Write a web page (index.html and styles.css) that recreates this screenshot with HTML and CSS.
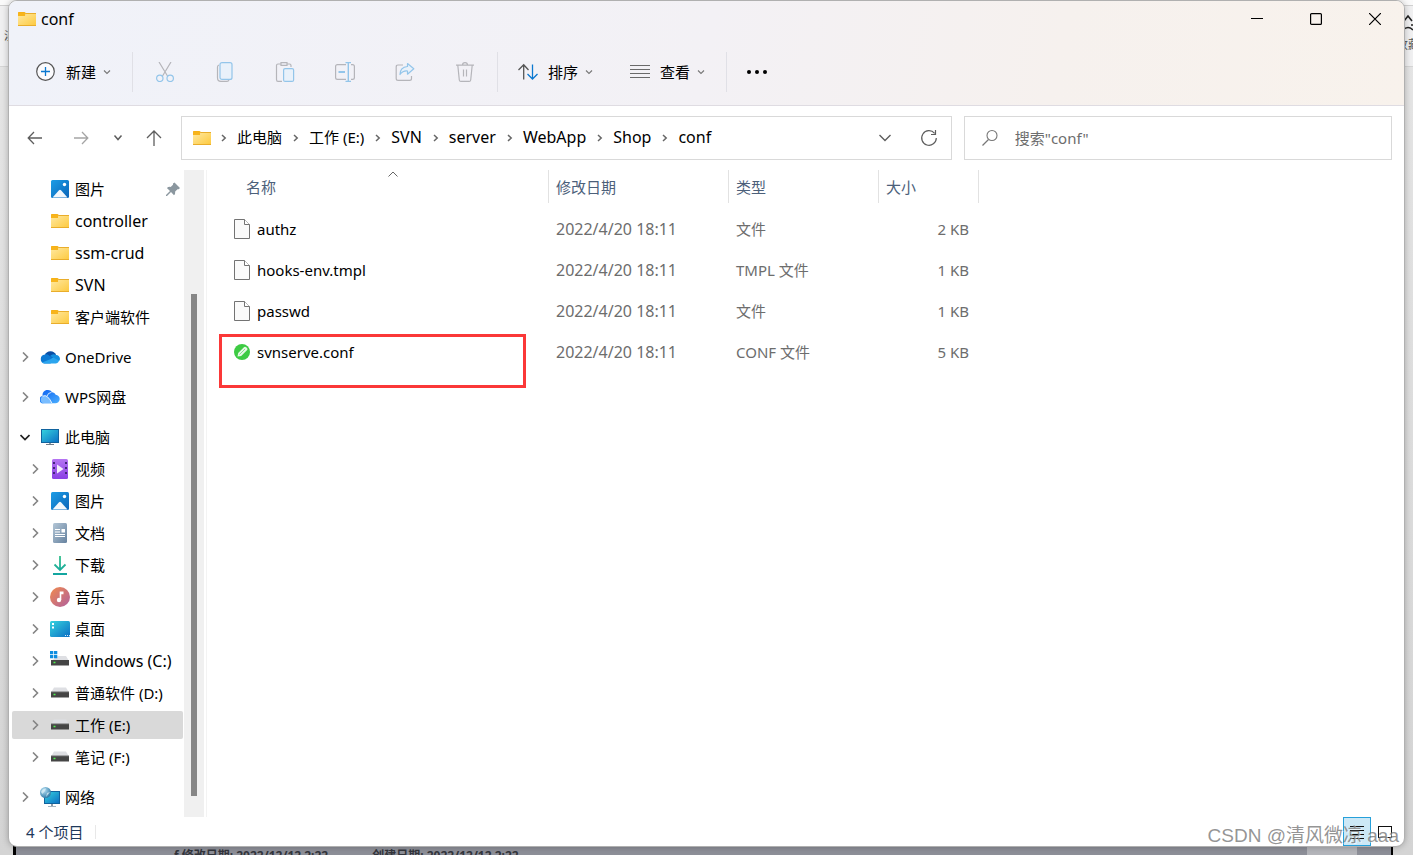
FILE: index.html
```html
<!DOCTYPE html>
<html lang="zh-CN">
<head>
<meta charset="utf-8">
<title>conf</title>
<link rel="stylesheet" href="styles.css">
</head>
<body>
<svg class="defs" aria-hidden="true">
  <defs>
    <linearGradient id="gFolder" x1="0" y1="0" x2="1" y2="1"><stop offset="0" stop-color="#ffe9a2"/><stop offset="1" stop-color="#fdc93d"/></linearGradient>
    <linearGradient id="gPic" x1="0" y1="0" x2="1" y2="1"><stop offset="0" stop-color="#1c9de6"/><stop offset="1" stop-color="#0b64b8"/></linearGradient>
    <linearGradient id="gScreen" x1="0" y1="0" x2="1" y2="1"><stop offset="0" stop-color="#36d3de"/><stop offset="1" stop-color="#0b6ec4"/></linearGradient>
    <linearGradient id="gVideo" x1="0" y1="0" x2="0" y2="1"><stop offset="0" stop-color="#b574f2"/><stop offset="1" stop-color="#8a40e4"/></linearGradient>
    <linearGradient id="gDoc" x1="0" y1="0" x2="1" y2="1"><stop offset="0" stop-color="#b3c6d6"/><stop offset="1" stop-color="#66829f"/></linearGradient>
    <linearGradient id="gMusic" x1="0" y1="0" x2="1" y2="1"><stop offset="0" stop-color="#f18a4c"/><stop offset="1" stop-color="#b0609f"/></linearGradient>
    <linearGradient id="gDown" x1="0" y1="0" x2="0" y2="1"><stop offset="0" stop-color="#35c08c"/><stop offset="1" stop-color="#12a5a0"/></linearGradient>
    <linearGradient id="gWps" x1="0" y1="0" x2="1" y2="1"><stop offset="0" stop-color="#0a5ef0"/><stop offset="1" stop-color="#4bb0ff"/></linearGradient>
    <radialGradient id="gGlobe" cx=".35" cy=".3" r=".8"><stop offset="0" stop-color="#b9e2f5"/><stop offset="1" stop-color="#22709f"/></radialGradient>
  </defs>
  <symbol id="folder" viewBox="0 0 20 20"><path d="M1 4q0-1 1-1h5.500l1.500 2h-2v2H1z" fill="#f5ad13"/><path d="M1 3.500h7.500V7H1z" fill="#f7b41b"/><path d="M1 7h7l1.500-2.500H19V17H1z" fill="url(#gFolder)"/><path d="M8.500 4.500H19M1 16.500h18" stroke="#e9ad2b" fill="none"/></symbol>
  <symbol id="picture" viewBox="0 0 20 20"><rect x="1" y="1" width="18" height="18" rx="1.500" fill="url(#gPic)"/><path d="M2.500 18.500 9 11.300q1-1 2 0l6.500 7.200z" fill="#f2f7fc"/><circle cx="14.500" cy="5.500" r="1.700" fill="#fff"/></symbol>
  <symbol id="onedrive" viewBox="0 0 20 20"><path d="M5 8a6 6 0 0 1 11-.2L12 13z" fill="#0a4fa6"/><path d="M4.500 16.500A4.600 4.600 0 0 1 5 7.400q2.500-.3 4.500 1.300l5 3.500-4 4.300z" fill="#0c79d3"/><path d="m11 12 4-3.800a4.200 4.200 0 0 1 .8 8.300H4.500q-1.500 0-2.500-1z" fill="#2ba5ee"/><path d="M10 9q2.500-2.600 6-1.100A4.300 4.300 0 0 1 20 12l-.5 1.700z" fill="#1590df"/></symbol>
  <symbol id="wps" viewBox="0 0 20 20"><path d="M2.500 7.800A5.300 5.300 0 0 1 12.200 5.300a4 4 0 0 1 3.500 2.500 4.200 4.200 0 0 1-.5 8.500H4A3.700 3.700 0 0 1 2.500 9z" fill="url(#gWps)"/><path d="M.8 13.500a4 4 0 0 1 6.400-4q3 2.200 5 6.800H4A3.300 3.300 0 0 1 .8 13.500z" fill="#79bdff"/><path d="M2.500 9.200q3-1.400 5 .6 2.500 2.200 4.500 6.500M7 9.200q.8-3.400 4.500-3.900" stroke="#fff" stroke-width=".8" fill="none"/></symbol>
  <symbol id="pc" viewBox="0 0 20 20"><rect x="1.500" y="2.500" width="17" height="13" fill="url(#gScreen)" stroke="#11639e"/><path d="M9 16h2v2H9z" fill="#8e9aa5"/><path d="M6 17.500h8" stroke="#6f7b87"/></symbol>
  <symbol id="video" viewBox="0 0 20 20"><rect x="2" width="16" height="20" rx="1.500" fill="url(#gVideo)"/><path d="M7 5.500v9l6.500-4.500z" fill="#f5eefc"/><path d="M4 3v15M16 3v15" stroke="#44257c" stroke-width="2" stroke-dasharray="2 3"/></symbol>
  <symbol id="doc" viewBox="0 0 20 20"><rect x="3" width="14" height="20" rx="1.500" fill="url(#gDoc)"/><path d="M5 6.500h5M5 9h5M5 11.500h10M5 13.500h10" stroke="#fff"/><path d="M11.500 6h3.500v3.500h-3.500z" fill="#fff"/></symbol>
  <symbol id="download" viewBox="0 0 20 20"><path d="M10 1v14M4.500 9.500 10 15l5.500-5.500M3 19h14" fill="none" stroke="url(#gDown)" stroke-width="1.800"/></symbol>
  <symbol id="music" viewBox="0 0 20 20"><circle cx="10" cy="10" r="10" fill="url(#gMusic)"/><circle cx="9" cy="13" r="2.200" fill="#fff"/><path d="M9.700 13V4.500h3.800v2.700h-2.200V13" fill="#fff"/></symbol>
  <symbol id="desktop" viewBox="0 0 20 20"><rect y="2" width="20" height="16" rx="1.500" fill="url(#gScreen)"/><path d="M2 4h2v2H2zM2 7.500h2v2H2z" fill="#fff"/><path d="M15 16.500h1m1 0h1m1 0h1" stroke="#d8ecfa"/></symbol>
  <symbol id="drive" viewBox="0 0 20 20"><path d="M4 4.500h12l3 5H1z" fill="#dedfe3"/><path d="M1 9h18v5.500H1z" fill="#454545"/><path d="M1 9h18" stroke="#686868"/><path d="M3.500 11.500h2" stroke="#4ef04e" stroke-width="1.500"/></symbol>
  <symbol id="windrive" viewBox="0 0 20 20"><path d="M8 5h8l3 5H1z" fill="#dedfe3"/><path d="M1 9h18v5.500H1z" fill="#454545"/><path d="M3.500 11.500h2" stroke="#4ef04e" stroke-width="1.500"/><path d="M0 0h3.300v3.300H0zM4 0h3.300v3.300H4zM0 4h3.300v3.300H0zM4 4h3.300v3.300H4z" fill="#0e8ee0"/></symbol>
  <symbol id="network" viewBox="0 0 20 20"><rect x="4.500" y="4.500" width="15" height="12" fill="url(#gScreen)" stroke="#11639e"/><path d="M11 17h2v2.500h-2z" fill="#8e9aa5"/><path d="M8 19.500h8" stroke="#a3b4c0"/><circle cx="5.500" cy="5.500" r="5.500" fill="url(#gGlobe)"/><path d="M1 5q2-4 5-3.500L5 4 2.500 7M6 10l1-4 3-1" fill="#e0f1f8" opacity=".7"/></symbol>
  <symbol id="pin" viewBox="0 0 16 16"><path d="m9.500 1.500 5.500 5.500-1.300 1.300-1.200-.1-2.300 2.300q.3 2.300-1.200 3.700L6 11 2 15H1v-1l4-4L1.900 7q1.500-1.400 3.800-1.100L8 3.700 8 2.500z" fill="#8b979f"/></symbol>
  <symbol id="right" viewBox="0 0 10 10"><path d="m3 .500 4.500 4.500-4.500 4.500" fill="none" stroke="#858585" stroke-width="1.600"/></symbol>
  <symbol id="open" viewBox="0 0 10 10"><path d="m.5 3 4.500 4.500L9.500 3" fill="none" stroke="#222" stroke-width="1.700"/></symbol>
  <symbol id="crumb" viewBox="0 0 7 8"><path d="m2 1 3.200 3L2 7" fill="none" stroke="#666" stroke-width="1.500"/></symbol>
  <symbol id="small" viewBox="0 0 8 8"><path d="m1 2.500 3 3 3-3" fill="none" stroke="#777" stroke-width="1.100"/></symbol>
  <symbol id="file" viewBox="0 0 16 20"><path d="M.5.500h10l5 5v14H.5z" fill="#fafafa" stroke="#737373"/><path d="M10.500.500v5h5" fill="#fff" stroke="#737373"/></symbol>
</svg>

<div class="backdrop" aria-hidden="true">
  <div class="behind-bar"><span>淡</span><span class="behind-fav"><svg width="22" height="22" viewBox="0 0 22 22"><path d="m7 8 4-5 4 5M6 12h2m6 0h2M6 17q5-5 10 0" fill="none" stroke="#222" stroke-width="1.600"/></svg>收藏</span></div>
  <div class="behind-strip"><span class="behind-thumb"></span><span>f 修改日期: 2022/12/12 2:22</span><span>创建日期: 2022/12/12 2:22</span><span class="behind-pen"></span></div>
</div>

<main class="window">
  <header class="top">
    <div class="titlebar">
      <svg class="ico"><use href="#folder"/></svg>
      <h1>conf</h1>
      <div class="controls">
        <button aria-label="最小化"><svg width="12" height="12" viewBox="0 0 12 12"><path d="M0 5.500h12" stroke="#000"/></svg></button>
        <button aria-label="最大化"><svg width="12" height="12" viewBox="0 0 12 12"><rect x=".6" y=".6" width="10.800" height="10.800" rx="1" fill="none" stroke="#000" stroke-width="1.200"/></svg></button>
        <button aria-label="关闭"><svg width="12" height="12" viewBox="0 0 12 12"><path d="m0 0 12 12M12 0 0 12" stroke="#000" stroke-width="1.200"/></svg></button>
      </div>
    </div>
    <div class="toolbar">
      <button class="cmd"><svg class="ico" viewBox="0 0 20 20"><circle cx="9.500" cy="9.500" r="8.800" fill="#fbfbfd" stroke="#555" stroke-width="1.200"/><path d="M9.500 5v9M5 9.500h9" stroke="#0b78d0" stroke-width="1.300"/></svg><span>新建</span><svg class="tiny"><use href="#small"/></svg></button>
      <i class="rule"></i>
      <button class="tool" aria-label="剪切" disabled><svg class="ico" viewBox="0 0 20 20" fill="none" stroke-width="1.200"><path d="m4 0 8.500 14M16 0 7.500 14" stroke="#b5b5ba"/><circle cx="4.800" cy="16.300" r="3.200" stroke="#93c5ea"/><circle cx="15.200" cy="16.300" r="3.200" stroke="#93c5ea"/></svg></button>
      <button class="tool" aria-label="复制" disabled><svg class="ico" viewBox="0 0 20 20" fill="none" stroke-width="1.200"><path d="M4 3q-1.500.5-1.500 2v11q0 3.400 3.400 3.400H12q1.500 0 2-1.400" stroke="#b5b5ba"/><rect x="5" y=".6" width="12" height="16.800" rx="2" stroke="#93c5ea" fill="#e9f1fa"/></svg></button>
      <button class="tool" aria-label="粘贴" disabled><svg class="ico" viewBox="0 0 20 20" fill="none" stroke-width="1.200"><path d="M6 2H3q-1.500 0-1.500 1.500v14Q1.500 19.400 3 19.400h4M12 2h2.500Q16 2 16 3.500V5M6 .6h6v2.700H6z" stroke="#b5b5ba"/><rect x="8.600" y="6.600" width="10" height="12.800" rx="1.500" stroke="#93c5ea" fill="#e9f1fa"/></svg></button>
      <button class="tool" aria-label="重命名" disabled><svg class="ico" viewBox="0 0 20 20" fill="none" stroke-width="1.200"><path d="M11 2.600H2.500Q.6 2.600.6 4.500v11q0 1.900 1.900 1.900H11M16 2.600h1.500q1.900 0 1.900 1.900v11q0 1.900-1.900 1.900H16" stroke="#b5b5ba"/><path d="M10.500.6h5.500M10.500 19.400h5.500M13.300.6v18.800" stroke="#93c5ea" stroke-width="1.400"/><path d="M3.500 10H10" stroke="#93c5ea" stroke-width="2.200"/></svg></button>
      <button class="tool" aria-label="共享" disabled><svg class="ico" viewBox="0 0 20 20" fill="none" stroke-width="1.200" stroke-linejoin="round"><path d="M8 3H3Q1.200 3 1.200 5v11.500q0 1.900 1.900 1.900h11.500q1.900 0 1.900-1.900V14" stroke="#b5b5ba"/><path d="m12.500 1.500 6.300 5.300-6.300 5.400V9Q8 8.500 5 12.500q0-7.300 7.500-8z" stroke="#93c5ea" fill="#e9f1fa"/></svg></button>
      <button class="tool" aria-label="删除" disabled><svg class="ico" viewBox="0 0 20 20" fill="none" stroke="#b5b5ba" stroke-width="1.200"><path d="M1 3.200h18M7.500 3q0-2.400 2.500-2.400T12.500 3M2.800 3.200 4.300 18q.2 1.400 1.500 1.400h8.400q1.300 0 1.500-1.400l1.500-14.800M8.500 7.500v7M11.500 7.500v7"/></svg></button>
      <i class="rule"></i>
      <button class="cmd"><svg class="ico" viewBox="0 0 20 20" fill="none" stroke-width="1.300"><path d="M5.700 17.500V3M.5 8l5.200-5.200L10.500 8" stroke="#555"/><path d="M14.500 2.500V17M9.500 12l5 5 5-5" stroke="#0b78d0"/></svg><span>排序</span><svg class="tiny"><use href="#small"/></svg></button>
      <button class="cmd"><svg class="ico" viewBox="0 0 20 20"><path d="M0 3.500h20M0 7.500h20M0 11.500h20M0 15.500h20" stroke="#6a6a6a" stroke-width="1.200"/></svg><span>查看</span><svg class="tiny"><use href="#small"/></svg></button>
      <i class="rule"></i>
      <button class="tool more" aria-label="更多"><svg class="ico" viewBox="0 0 20 20" overflow="visible"><circle cx="2" cy="10" r="2"/><circle cx="10" cy="10" r="2"/><circle cx="18" cy="10" r="2"/></svg></button>
    </div>
  </header>

  <div class="navrow">
    <button class="nav" aria-label="后退"><svg width="16" height="14" viewBox="0 0 16 14"><path d="M15 7H1.500M7 1 1.200 7 7 13" fill="none" stroke="#5e5e5e" stroke-width="1.300"/></svg></button>
    <button class="nav" aria-label="前进" disabled><svg width="16" height="14" viewBox="0 0 16 14"><path d="M1 7h13.500M9 1l5.800 6L9 13" fill="none" stroke="#a5a5a5" stroke-width="1.300"/></svg></button>
    <button class="nav recent" aria-label="最近"><svg width="10" height="8" viewBox="0 0 10 8"><path d="m1.500 1.500 3.500 4 3.500-4" fill="none" stroke="#5e5e5e" stroke-width="1.500"/></svg></button>
    <button class="nav up" aria-label="上移"><svg width="16" height="16" viewBox="0 0 16 16"><path d="M8 16V1M1 8l7-7 7 7" fill="none" stroke="#5e5e5e" stroke-width="1.300"/></svg></button>
    <div class="address">
      <svg class="ico"><use href="#folder"/></svg>
      <svg class="sep"><use href="#crumb"/></svg><a href="#">此电脑</a>
      <svg class="sep"><use href="#crumb"/></svg><a href="#">工作 (E:)</a>
      <svg class="sep"><use href="#crumb"/></svg><a class="latin" href="#">SVN</a>
      <svg class="sep"><use href="#crumb"/></svg><a class="latin" href="#">server</a>
      <svg class="sep"><use href="#crumb"/></svg><a class="latin" href="#">WebApp</a>
      <svg class="sep"><use href="#crumb"/></svg><a class="latin" href="#">Shop</a>
      <svg class="sep"><use href="#crumb"/></svg><a class="latin" href="#">conf</a>
      <div class="address-actions">
        <button aria-label="历史"><svg width="12" height="8" viewBox="0 0 12 8"><path d="m.5 1 5.500 5.500L11.500 1" fill="none" stroke="#5e5e5e" stroke-width="1.400"/></svg></button>
        <button aria-label="刷新"><svg width="18" height="18" viewBox="0 0 18 18"><path d="M14.600 4.300A7.300 7.300 0 1 0 16.300 9M15.500 1v4.500H11" fill="none" stroke="#5e5e5e" stroke-width="1.200"/></svg></button>
      </div>
    </div>
    <label class="search">
      <svg width="18" height="18" viewBox="0 0 18 18"><circle cx="11" cy="6.500" r="5" fill="none" stroke="#777" stroke-width="1.100"/><path d="M7.500 10.500 1.500 16.500" stroke="#777" stroke-width="1.200"/></svg>
      <input type="text" placeholder='搜索"conf"' aria-label="搜索">
    </label>
  </div>

  <div class="content">
    <nav class="sidebar">
      <ul>
        <li class="sub"><i class="chev"></i><svg class="ico"><use href="#picture"/></svg><span>图片</span><svg class="pin"><use href="#pin"/></svg></li>
        <li class="sub latin"><i class="chev"></i><svg class="ico"><use href="#folder"/></svg><span>controller</span></li>
        <li class="sub latin"><i class="chev"></i><svg class="ico"><use href="#folder"/></svg><span>ssm-crud</span></li>
        <li class="sub latin"><i class="chev"></i><svg class="ico"><use href="#folder"/></svg><span>SVN</span></li>
        <li class="sub"><i class="chev"></i><svg class="ico"><use href="#folder"/></svg><span>客户端软件</span></li>
      </ul>
      <ul><li><svg class="chev"><use href="#right"/></svg><svg class="ico"><use href="#onedrive"/></svg><span>OneDrive</span></li></ul>
      <ul><li><svg class="chev"><use href="#right"/></svg><svg class="ico"><use href="#wps"/></svg><span>WPS网盘</span></li></ul>
      <ul>
        <li><svg class="chev"><use href="#open"/></svg><svg class="ico"><use href="#pc"/></svg><span>此电脑</span></li>
        <li class="sub"><svg class="chev"><use href="#right"/></svg><svg class="ico"><use href="#video"/></svg><span>视频</span></li>
        <li class="sub"><svg class="chev"><use href="#right"/></svg><svg class="ico"><use href="#picture"/></svg><span>图片</span></li>
        <li class="sub"><svg class="chev"><use href="#right"/></svg><svg class="ico"><use href="#doc"/></svg><span>文档</span></li>
        <li class="sub"><svg class="chev"><use href="#right"/></svg><svg class="ico"><use href="#download"/></svg><span>下载</span></li>
        <li class="sub"><svg class="chev"><use href="#right"/></svg><svg class="ico"><use href="#music"/></svg><span>音乐</span></li>
        <li class="sub"><svg class="chev"><use href="#right"/></svg><svg class="ico"><use href="#desktop"/></svg><span>桌面</span></li>
        <li class="sub latin"><svg class="chev"><use href="#right"/></svg><svg class="ico"><use href="#windrive"/></svg><span>Windows (C:)</span></li>
        <li class="sub"><svg class="chev"><use href="#right"/></svg><svg class="ico"><use href="#drive"/></svg><span>普通软件 (D:)</span></li>
        <li class="sub selected"><svg class="chev"><use href="#right"/></svg><svg class="ico"><use href="#drive"/></svg><span>工作 (E:)</span></li>
        <li class="sub"><svg class="chev"><use href="#right"/></svg><svg class="ico"><use href="#drive"/></svg><span>笔记 (F:)</span></li>
      </ul>
      <ul><li><svg class="chev"><use href="#right"/></svg><svg class="ico"><use href="#network"/></svg><span>网络</span></li></ul>
    </nav>
    <div class="scroll"><div class="thumb"></div></div>
    <section class="files">
      <table>
        <colgroup><col class="c-name"><col class="c-date"><col class="c-type"><col class="c-size"></colgroup>
        <thead><tr>
          <th class="name"><button>名称</button><svg class="sort" viewBox="0 0 10 6"><path d="m.5 5.500 4.500-4.500 4.500 4.500" fill="none" stroke="#666"/></svg></th>
          <th><button>修改日期</button></th><th><button>类型</button></th><th><button>大小</button></th>
        </tr></thead>
        <tbody>
          <tr><td class="name"><div><svg class="doc"><use href="#file"/></svg>authz</div></td><td class="latin">2022/4/20 18:11</td><td>文件</td><td class="size">2 KB</td></tr>
          <tr><td class="name"><div><svg class="doc"><use href="#file"/></svg>hooks-env.tmpl</div></td><td class="latin">2022/4/20 18:11</td><td>TMPL 文件</td><td class="size">1 KB</td></tr>
          <tr><td class="name"><div><svg class="doc"><use href="#file"/></svg>passwd</div></td><td class="latin">2022/4/20 18:11</td><td>文件</td><td class="size">1 KB</td></tr>
          <tr><td class="name marked"><div><svg class="doc" viewBox="0 0 16 20"><circle cx="8" cy="10" r="8" fill="#3dcb43"/><path d="m3.500 14.500.7-3.500 6-6q1-.8 2 .2l.8.8q1 1 .2 2l-6 6z" fill="#e4f8e4"/><path d="m5.500 12.500 5.500-5.500" stroke="#8ade8d"/></svg>svnserve.conf</div></td><td class="latin">2022/4/20 18:11</td><td>CONF 文件</td><td class="size">5 KB</td></tr>
        </tbody>
      </table>
    </section>
  </div>

  <footer class="status">
    <span>4 个项目</span><i class="tick"></i>
    <div class="views">
      <button class="on" aria-label="详细信息"><svg width="14" height="14" viewBox="0 0 14 14"><path d="M0 1.500h14M0 5.500h14M0 9.500h14M0 13.500h14" stroke="#111"/></svg></button>
      <button aria-label="大图标"><svg width="14" height="14" viewBox="0 0 14 14"><rect x=".5" y="1.500" width="13" height="11" fill="none" stroke="#111"/></svg></button>
    </div>
  </footer>
</main>
<div class="watermark">CSDN @清风微凉 aaa</div>
</body>
</html>
```
FILE: styles.css
```css
*, *::after { box-sizing: border-box; }
body {
  margin: 0;
  min-height: 100vh;
  display: flex;
  flex-direction: column;
  position: relative;
  background: #dcdcdc;
  color: #000;
  font: 15px/20px "Noto Sans", "Noto Sans CJK SC", sans-serif;
}
button, input { font: inherit; color: inherit; border: 0; background: none; padding: 0; }
button { display: flex; align-items: center; justify-content: center; }
svg { display: block; flex: none; }
ul { list-style: none; margin: 0; padding: 0; }
.defs { position: absolute; width: 0; height: 0; }
.ico { width: 20px; height: 20px; }
.latin { font-size: 16px; }

.backdrop { position: absolute; inset: 0; overflow: hidden; background: linear-gradient(#e6e6e6, #d4d4d4); border-top: 5px solid #fafafa; }
.behind-bar { display: flex; justify-content: space-between; height: 62px; padding: 20px 0 0 4px; background: #f0f0f1; border-top: 1px solid #d0d0d0; border-bottom: 1px solid #d5d5d5; font-size: 12px; color: #555; }
.behind-fav { display: flex; flex-direction: column; align-items: center; position: absolute; top: 8px; right: -7px; }
.behind-strip { position: absolute; left: 13px; right: 20px; bottom: 0; height: 12px; overflow: hidden; display: flex; gap: 44px; padding: 6px 0 0 30px; background: #8d8f98; border: solid #000; border-width: 0 2px 0 3px; font-size: 12px; line-height: 14px; font-weight: bold; color: #33353c; }
.behind-thumb { width: 84px; }
.behind-pen { position: absolute; right: 34px; top: 0; width: 50px; height: 12px; background: #b4b5ba; }

.window { position: relative; flex: 1; display: flex; flex-direction: column; margin: 0 8px 8px; border: 1px solid #b0b0b0; border-radius: 9px; background: #fff; overflow: hidden; box-shadow: 0 0 6px rgba(0,0,0,.25); }
.top { background: linear-gradient(100deg, #f0f2f9 0%, #f3f1f5 50%, #f6f1ee 75%, #f8f2ec 100%); border-bottom: 1px solid #dfdce2; }
.titlebar { display: flex; align-items: center; height: 36px; padding-left: 8px; }
.titlebar h1 { margin: 0 0 0 4px; font-size: 16px; font-weight: 400; }
.controls { display: flex; margin-left: auto; }
.controls button { width: 59px; height: 36px; }
.toolbar { display: flex; align-items: center; height: 68px; padding: 2px 0 0 9px; }
.cmd { height: 40px; padding: 0 19px 0 18px; gap: 10px; }
.cmd .tiny { margin-left: -3px; }
.tiny { width: 8px; height: 8px; }
.tool { width: 60px; height: 40px; }
.tool.more { width: 56px; }
.rule { width: 1px; height: 40px; margin: 0 2px; background: #e0e0e6; }

.navrow { display: flex; align-items: center; height: 64px; padding: 0 12px 0 3px; }
.nav { width: 46px; height: 40px; }
.nav.recent { width: 28px; }
.nav.up { width: 44px; }
.address, .search { display: flex; align-items: center; height: 44px; border: 1px solid #d9d9d9; min-width: 0; }
.address { flex: 9 1 90px; margin: 0 12px 0 5px; padding-left: 10px; }
.address a { padding-bottom: 2px; color: #000; text-decoration: none; white-space: nowrap; }
.sep { width: 7px; height: 8px; margin: 0 10px; }
.address .ico + .sep { margin-left: 8px; }
.address-actions { display: flex; margin-left: auto; }
.address-actions button { width: 44px; height: 42px; }
.search { flex: 5 1 50px; padding-left: 16px; gap: 16px; }
.search input { flex: 1; min-width: 0; height: 40px; outline: 0; }
.search input::placeholder { color: #6d6d6d; opacity: 1; }

.content { flex: 1; display: flex; }
.sidebar { width: 175px; padding: 5px 1px 5px 3px; display: flex; flex-direction: column; gap: 12px; }
.sidebar ul { display: flex; flex-direction: column; gap: 4px; }
.sidebar li { display: flex; align-items: center; height: 28px; padding-left: 8px; border-radius: 2px; white-space: nowrap; }
.sidebar .sub { padding-left: 18px; }
.sidebar .selected { background: #d9d9d9; }
.sidebar .ico { margin-right: 5px; }
.chev { flex: none; width: 10px; height: 10px; margin-right: 10px; }
.pin { width: 16px; height: 16px; margin: 0 2px 0 auto; }
.scroll { display: flex; width: 20px; padding: 124px 7px 21px; background: #f0f0f0; }
.thumb { flex: 1; background: #868686; }
.files { flex: 1; min-width: 0; margin-left: 2px; border-left: 1px solid #f3f3f3; }
table { border-collapse: collapse; table-layout: fixed; width: 772px; }
.c-name { width: 342px; }
.c-date { width: 180px; }
.c-type { width: 150px; }
.c-size { width: 100px; }
th { position: relative; height: 39px; padding: 0; vertical-align: top; font-weight: 400; color: #4c607a; }
th button { width: 100%; height: 33px; justify-content: flex-start; padding-left: 7px; border-right: 1px solid #e2e2e2; }
th.name button { padding-left: 39px; }
.sort { position: absolute; left: 181px; top: 1px; width: 10px; height: 6px; }
td { height: 41px; padding: 0 10px 2px 7px; color: #6d6d6d; }
td.name { position: relative; padding-left: 27px; color: #000; }
td.name div { display: flex; align-items: center; gap: 7px; }
.doc { width: 16px; height: 20px; }
td.size { text-align: right; }
.marked::after { content: ""; position: absolute; left: 12px; top: 2px; width: 307px; height: 54px; border: 3px solid #fb3838; }

.status { display: flex; align-items: center; height: 29px; padding: 0 5px 0 17px; color: #1e395b; }
.tick { width: 1px; height: 14px; margin-left: 12px; background: #e8e8e8; }
.views { display: flex; margin-left: auto; }
.views button { width: 28px; height: 29px; }
.views .on { background: #cce8f6; border: 1px solid #26a0da; }
.watermark { position: absolute; right: 14px; bottom: 8px; font: 19px/22px "Liberation Sans", "Noto Sans CJK SC", sans-serif; color: rgba(130,130,130,.85); text-shadow: 1px 1px 0 rgba(255,255,255,.6); }
```
